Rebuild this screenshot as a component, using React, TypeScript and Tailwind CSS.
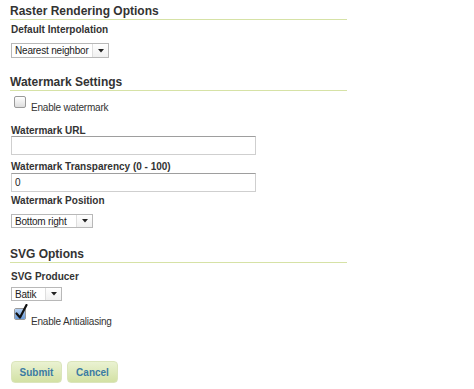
import React from "react";

const font = { fontFamily: '"Liberation Sans", Arial, sans-serif' };

function Heading({ children }: { children: React.ReactNode }) {
  return (
    <div className="h-[17px] w-[337px] border-b border-[#d6e2a6]">
      <h3 className="text-[12px] leading-[17px] font-bold text-[#333]">{children}</h3>
    </div>
  );
}

function Label({ children }: { children: React.ReactNode }) {
  return <div className="h-[11px] whitespace-nowrap text-[10px] leading-[11px] font-bold text-[#333]">{children}</div>;
}

function FakeSelect({ value, width, height = 15 }: { value: string; width: number; height?: number }) {
  return (
    <div className="flex items-stretch border border-[#b8b8b8] bg-white" style={{ width, height }}>
      <div className="flex flex-1 items-center whitespace-nowrap pl-[3px] text-[10px] tracking-[-0.2px] text-[#222]">{value}</div>
      <div className="flex w-[16px] items-center justify-center border-l border-[#dedede] bg-gradient-to-b from-white to-[#f0f0f0]">
        <svg width="6" height="4" viewBox="0 0 6 4">
          <path d="M0 0 H6 L3 3.5 Z" fill="#222" />
        </svg>
      </div>
    </div>
  );
}

function Checkbox({ checked }: { checked?: boolean }) {
  return (
    <div className="relative ml-[3px] h-[12px] w-[12px] shrink-0 rounded-[2px] border border-[#9a9a9a] bg-gradient-to-b from-white to-[#dddddd]">
      {checked && (
        <>
          <div className="absolute inset-0 rounded-[1px] bg-gradient-to-b from-[#b3cff2] to-[#6a9bd9]" />
          <svg className="absolute left-[0px] top-[-5px]" width="13" height="16" viewBox="0 0 13 16">
            <path d="M1.5 9.5 L5 13.5 L11.5 1" stroke="#111" strokeWidth="2.2" fill="none" strokeLinecap="round" strokeLinejoin="round" />
          </svg>
        </>
      )}
    </div>
  );
}

function TextInput({ value }: { value?: string }) {
  return (
    <div className="h-[19px] w-[245px] border border-[#cfcfcf] border-t-[#9e9e9e] bg-white pl-[3px] text-[10px] leading-[17px] text-[#222]">
      {value}
    </div>
  );
}

function Button({ children }: { children: React.ReactNode }) {
  return (
    <button className="h-[22px] w-[51px] rounded-[4px] border border-[#dbe5bb] bg-gradient-to-b from-[#eaf2d2] to-[#d3e1a4] text-[10px] font-bold text-[#3b7ba3]">
      {children}
    </button>
  );
}

export default function App() {
  return (
    <div className="h-[389px] w-[474px] overflow-hidden bg-white pl-[10px] pt-[3px]" style={font}>
      <Heading>Raster Rendering Options</Heading>
      <div className="ml-[1px]">
        <div className="mt-[4px]">
          <Label>Default Interpolation</Label>
        </div>
        <div className="mt-[8px]">
          <FakeSelect value="Nearest neighbor" width={98} />
        </div>
      </div>

      <div className="mt-[16px]">
        <Heading>Watermark Settings</Heading>
      </div>
      <div className="ml-[1px]">
        <div className="mt-[5px] flex h-[14px] items-start gap-[5px]">
          <Checkbox />
          <span className="mt-[5px] text-[10px] leading-[13px] tracking-[-0.2px] text-[#333]">Enable watermark</span>
        </div>
        <div className="mt-[15px]">
          <Label>Watermark URL</Label>
        </div>
        <TextInput />
        <div className="mt-[6px]">
          <Label>Watermark Transparency (0 - 100)</Label>
        </div>
        <div className="mt-[1px]">
          <TextInput value="0" />
        </div>
        <div className="mt-[3px]">
          <Label>Watermark Position</Label>
        </div>
        <div className="mt-[8px]">
          <FakeSelect value="Bottom right" width={82} height={14} />
        </div>
      </div>

      <div className="mt-[18px]">
        <Heading>SVG Options</Heading>
      </div>
      <div className="ml-[1px]">
        <div className="mt-[8px]">
          <Label>SVG Producer</Label>
        </div>
        <div className="mt-[5px]">
          <FakeSelect value="Batik" width={51} height={14} />
        </div>
        <div className="mt-[7px] flex h-[19px] items-start gap-[5px]">
          <Checkbox checked />
          <span className="mt-[7px] text-[10px] leading-[13px] tracking-[-0.2px] text-[#333]">Enable Antialiasing</span>
        </div>
        <div className="mt-[34px] flex gap-[5px]">
          <Button>Submit</Button>
          <Button>Cancel</Button>
        </div>
      </div>
    </div>
  );
}
